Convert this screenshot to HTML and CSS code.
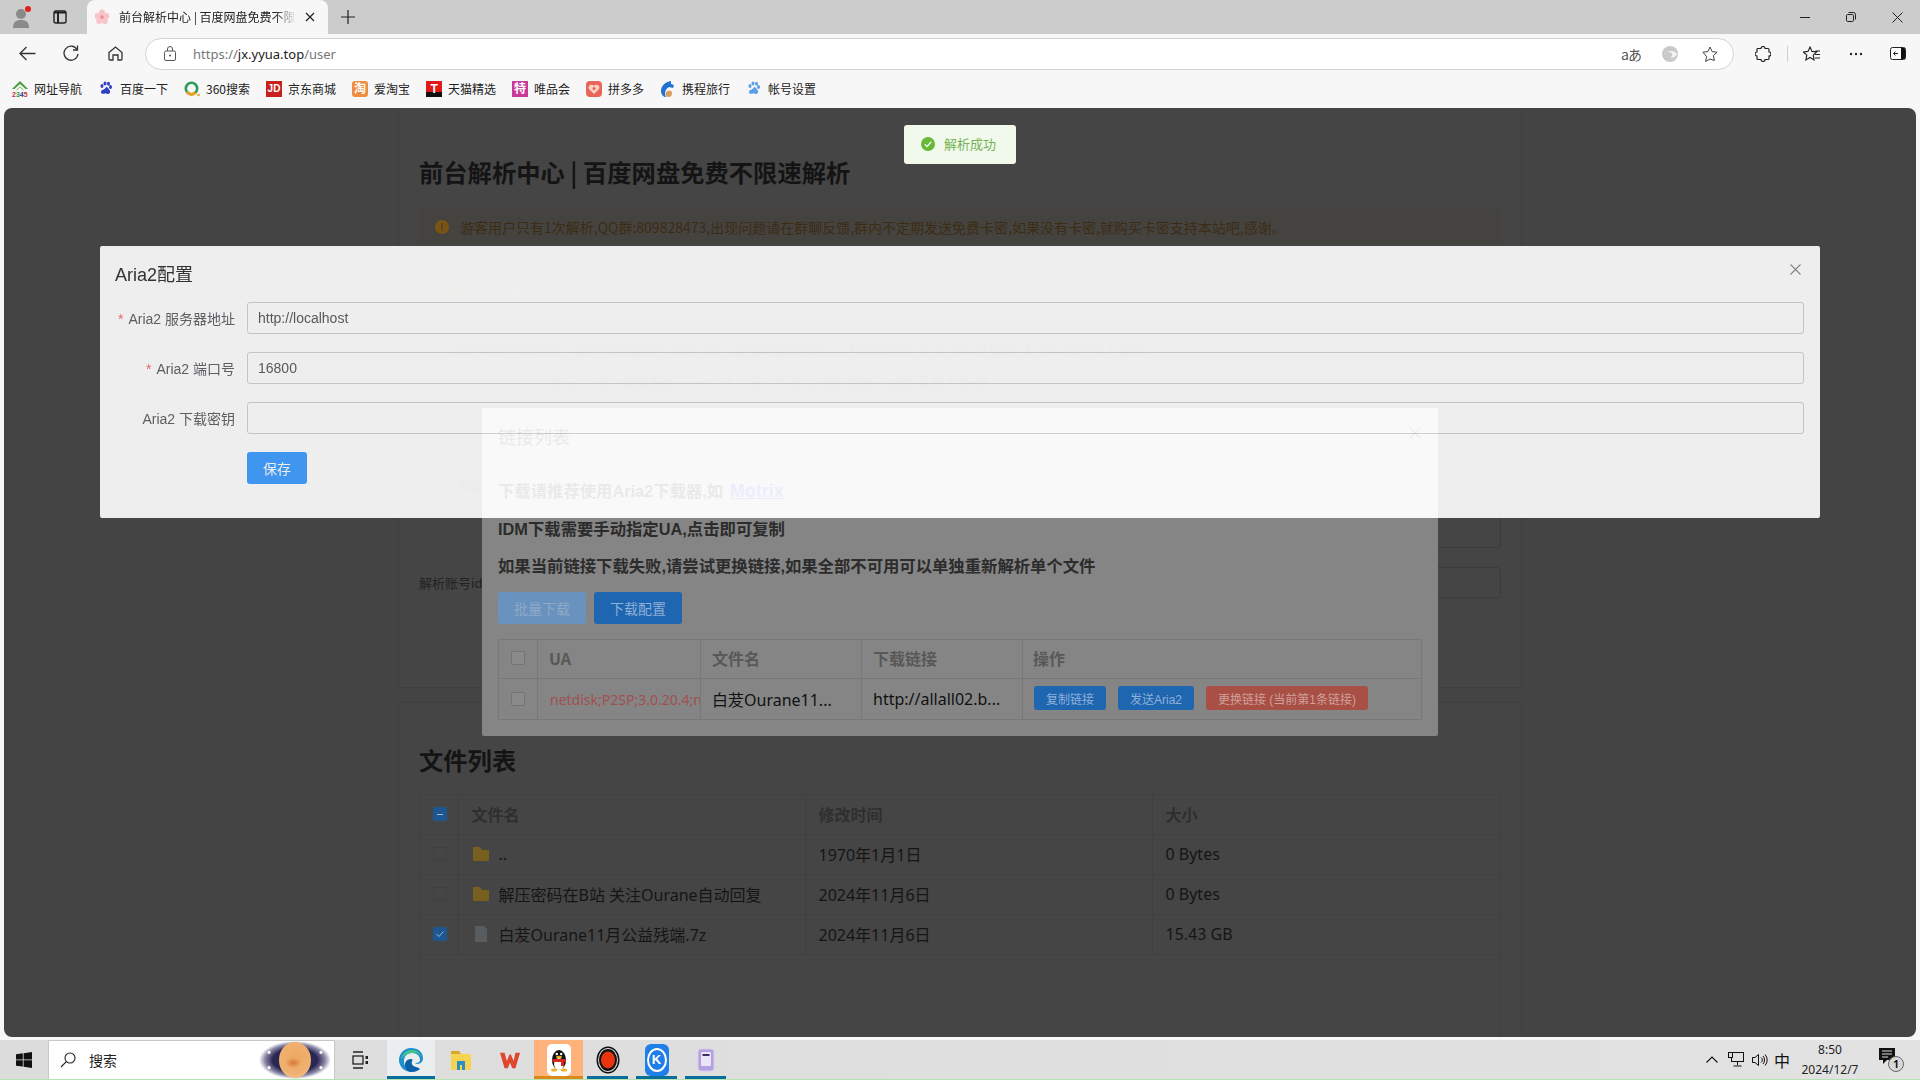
FILE: index.html
```html
<!DOCTYPE html>
<html lang="zh-CN">
<head>
<meta charset="utf-8">
<title>前台解析中心 | 百度网盘免费不限速解析</title>
<link rel="stylesheet" href="styles.css">
</head>
<body>
<header class="tabbar">
  <div class="profile">
    <svg width="20" height="24" viewBox="0 0 20 24"><circle cx="9" cy="9" r="5" fill="#8a8a8a"/><path d="M1 23c0-6 3-8 8-8s8 2 8 8z" fill="#8a8a8a"/><circle cx="16" cy="4" r="3" fill="#e0201c"/></svg>
  </div>
  <div class="tabactions">
    <svg width="16" height="16" viewBox="0 0 16 16" fill="none" stroke="#222" stroke-width="1.4"><rect x="2" y="2" width="12" height="12" rx="2"/><path d="M2 3.500h12M6 3v11" stroke-width="2"/></svg>
  </div>
  <div class="tab">
    <svg class="favicon" width="16" height="16" viewBox="0 0 16 16"><g fill="#f8c4c8"><circle cx="8" cy="3.600" r="3"/><circle cx="3.600" cy="7" r="3"/><circle cx="12.400" cy="7" r="3"/><circle cx="5.200" cy="12" r="3"/><circle cx="10.800" cy="12" r="3"/></g><circle cx="8" cy="8" r="2" fill="#ee8f98"/></svg>
    <span class="tabtitle">前台解析中心 | 百度网盘免费不限速解析</span>
    <svg class="tabclose" width="10" height="10" viewBox="0 0 10 10" stroke="#222" stroke-width="1.2"><path d="M1 1l8 8M9 1l-8 8"/></svg>
  </div>
  <div class="newtab">
    <svg width="14" height="14" viewBox="0 0 14 14" stroke="#222" stroke-width="1.2"><path d="M7 0v14M0 7h14"/></svg>
  </div>
  <div class="spacer"></div>
  <div class="winbtn"><svg width="10" height="10" viewBox="0 0 10 10" stroke="#222"><path d="M0 5.500h10"/></svg></div>
  <div class="winbtn"><svg width="10" height="10" viewBox="0 0 10 10" fill="none" stroke="#222"><rect x=".5" y="2.500" width="7" height="7" rx="1.200"/><path d="M2.500 .5h5a2 2 0 0 1 2 2v5"/></svg></div>
  <div class="winbtn"><svg width="11" height="11" viewBox="0 0 11 11" stroke="#222"><path d="M.5.5l10 10M10.500.5l-10 10"/></svg></div>
</header>

<nav class="toolbar">
  <div class="navbtn"><svg width="17" height="15" viewBox="0 0 17 15" fill="none" stroke="#333" stroke-width="1.3"><path d="M16.500 7.500H1M7.500 1 1 7.500 7.500 14"/></svg></div>
  <div class="navbtn"><svg width="16" height="17" viewBox="0 0 16 17" fill="none" stroke="#333" stroke-width="1.3"><path d="M14 4.500A7 7 0 1 0 15 9"/><path d="M14.500 .5v4.500H10"/></svg></div>
  <div class="navbtn"><svg width="15" height="15" viewBox="0 0 15 15" fill="none" stroke="#333" stroke-width="1.3"><path d="M1 6.500 7.500 1 14 6.500V13a1 1 0 0 1-1 1h-3V9H5v5H2a1 1 0 0 1-1-1z"/></svg></div>
  <div class="address">
    <svg class="lock" width="12" height="15" viewBox="0 0 12 15" fill="none" stroke="#555"><rect x=".5" y="5" width="11" height="9.500" rx="1.500"/><path d="M3.500 5V3a2.500 2.500 0 0 1 5 0v2"/><circle cx="6" cy="9.500" r="1" fill="#555" stroke="none"/></svg>
    <span class="url"><span class="urlmuted">https://</span>jx.yyua.top<span class="urlmuted">/user</span></span>
    <span class="translate">aあ</span>
    <svg class="addr-edge" width="16" height="16" viewBox="0 0 16 16"><circle cx="8" cy="8" r="8" fill="#c9c9c9"/><path d="M1.500 9.500C3 5.500 8 5 10 7.500c1 1.500 0 3.500-2 3.500 3 1.500 6 0 7-3-1-2-3-3-6-3-3 0-6 2-7.500 4.500z" fill="#f4f4f4"/></svg>
    <svg class="addr-star" width="16" height="16" viewBox="0 0 16 16" fill="none" stroke="#444"><path d="M8 1l2.100 4.600 5 .6-3.700 3.400 1 4.900L8 13l-4.400 2.500 1-4.900L.9 6.200l5-.6z"/></svg>
  </div>
  <div class="toolright">
    <div class="navbtn2"><svg width="16" height="16" viewBox="0 0 16 16" fill="none" stroke="#222" stroke-width="1.200"><path d="M6 2.500a2 2 0 0 1 4 0h3a1 1 0 0 1 1 1v2.500a2 2 0 0 1 0 4v2.500a1 1 0 0 1-1 1h-3a2 2 0 0 1-4 0H3a1 1 0 0 1-1-1V10a2 2 0 0 1 0-4V3.500a1 1 0 0 1 1-1z"/></svg></div>
    <div class="toolsep"></div>
    <div class="navbtn2"><svg width="18" height="16" viewBox="0 0 18 16" fill="none" stroke="#222" stroke-width="1.100"><path d="M7 1l2 4.400 4.600.6-3.400 3.200.9 4.700L7 11.500 2.900 13.900l.9-4.700L.4 6 5 5.400zM12.500 5H17M12 8.500h5M12 12h5"/></svg></div>
    <div class="navbtn2"><svg width="14" height="4" viewBox="0 0 14 4" fill="#222"><circle cx="2" cy="2" r="1.200"/><circle cx="7" cy="2" r="1.200"/><circle cx="12" cy="2" r="1.200"/></svg></div>
    <div class="navbtn2 shift"><svg width="16" height="13" viewBox="0 0 16 13"><rect x=".5" y=".5" width="15" height="12" rx="2" fill="#fff" stroke="#222"/><path d="M11 1h3a1 1 0 0 1 1 1v9a1 1 0 0 1-1 1h-3z" fill="#111"/><path d="M8 6.500H3.500M5.500 4.500l-2 2 2 2" stroke="#222" fill="none"/></svg></div>
  </div>
</nav>

<nav class="bookmarks">
  <a class="bm"><svg width="16" height="16" viewBox="0 0 16 16"><path d="M8 0 0 8h2.500L8 3l5.500 5H16z" fill="#4a9b3c"/><path d="M4.500 9 8 6l3.500 3" fill="none" stroke="#7bbf5a"/><text x="0" y="15.500" font-size="7" font-family="Liberation Sans" font-weight="700"><tspan fill="#c33">2</tspan><tspan fill="#393">3</tspan><tspan fill="#339">4</tspan><tspan fill="#c33">5</tspan></text></svg>网址导航</a>
  <a class="bm"><svg class="pawsvg" width="16" height="16" viewBox="0 0 16 16" fill="#2f3fc0"><ellipse cx="4" cy="5" rx="1.500" ry="2"/><ellipse cx="7" cy="2.500" rx="1.500" ry="2"/><ellipse cx="10.500" cy="2.800" rx="1.500" ry="2"/><ellipse cx="12.500" cy="6" rx="1.500" ry="2"/><path d="M8 6c2 0 2.500 2 3.500 3s1 4-1.500 4-2-1-3-.6S3 13.500 3 11s4-2 5-5z"/></svg>百度一下</a>
  <a class="bm"><svg width="16" height="16" viewBox="0 0 16 16" fill="none"><circle cx="7.500" cy="7.500" r="5.700" stroke="#2a9d5c" stroke-width="2.600"/><path d="M2.800 11a5.700 5.700 0 0 0 8.800 .5" stroke="#f0a020" stroke-width="2.600"/><circle cx="14.500" cy="14" r="1.300" fill="#f0a020"/></svg>360搜索</a>
  <a class="bm"><span class="sq sq-jd">JD</span>京东商城</a>
  <a class="bm"><span class="sq sq-tao">淘</span>爱淘宝</a>
  <a class="bm"><span class="sq sq-t">T</span>天猫精选</a>
  <a class="bm"><span class="sq sq-te">特</span>唯品会</a>
  <a class="bm"><svg width="16" height="16" viewBox="0 0 16 16"><rect width="16" height="16" rx="4" fill="#e8655a"/><path d="M8 13 3 8c-2-3 3-6 5-3 2-3 7 0 5 3z" fill="#f8d0c4"/><circle cx="8" cy="7.500" r="1.500" fill="#e8655a"/></svg>拼多多</a>
  <a class="bm"><svg width="16" height="16" viewBox="0 0 16 16"><path d="M11 0C5 1 1 5 1 10c0 4 3 6 5 6-2-3-1-8 3-10l4 1 1-3-3-1z" fill="#1f74d0"/><path d="M8 10a3 3 0 0 0 1 6c3 0 3-3 3-5-1-1-3-2-4-1z" fill="#d8a060"/></svg>携程旅行</a>
  <a class="bm"><svg width="16" height="16" viewBox="0 0 16 16" fill="#5a9fe8"><ellipse cx="4" cy="5" rx="1.500" ry="2"/><ellipse cx="7" cy="2.500" rx="1.500" ry="2"/><ellipse cx="10.500" cy="2.800" rx="1.500" ry="2"/><ellipse cx="12.500" cy="6" rx="1.500" ry="2"/><path d="M8 6c2 0 2.500 2 3.500 3s1 4-1.500 4-2-1-3-.6S3 13.500 3 11s4-2 5-5z"/></svg>帐号设置</a>
</nav>

<main class="main">
  <div class="viewport">
    <div class="page">
      <section class="card card-top">
        <h1 class="pagetitle">前台解析中心 | 百度网盘免费不限速解析</h1>
        <div class="alert">
          <svg width="14" height="14" viewBox="0 0 14 14"><circle cx="7" cy="7" r="7" fill="#7a5410"/><rect x="6.200" y="3" width="1.600" height="5.500" fill="#444"/><rect x="6.200" y="9.500" width="1.600" height="1.600" fill="#444"/></svg>
          <span>游客用户只有1次解析,QQ群:809828473,出现问题请在群聊反馈,群内不定期发送免费卡密,如果没有卡密,就购买卡密支持本站吧,感谢。</span>
        </div>
        <p class="note-green">解析中心公告</p>
        <p class="note-long">请使用百度网盘客户端分享链接进行解析,输入链接和提取码后点击解析按钮,支持文件夹解析,大文件请使用下载器</p>
        <p class="note-tip">提示： 请勿频繁解析同一文件，多次失败后请更换账号或联系群主处理</p>
        <div class="field field-big"><span class="field-label">卡密</span><div class="field-input"></div></div>
        <div class="field"><span class="field-label">解析账号id</span><div class="field-input"></div></div>
      </section>
      <section class="card card-files">
        <h2 class="pagetitle">文件列表</h2>
        <div class="filebox">
          <table class="filetable">
            <colgroup><col class="fc1"><col class="fc2"><col class="fc3"><col class="fc4"></colgroup>
            <thead>
              <tr><th><span class="cb cb-on"><span class="cb-dash"></span></span></th><th>文件名</th><th>修改时间</th><th>大小</th></tr>
            </thead>
            <tbody>
              <tr><td><span class="cb"></span></td><td><span class="namecell"><svg width="18" height="18" viewBox="0 0 18 18"><path d="M1 2h7l2 3h7v10a1 1 0 0 1-1 1H2a1 1 0 0 1-1-1z" fill="#75601f"/></svg>..</span></td><td>1970年1月1日</td><td>0 Bytes</td></tr>
              <tr><td><span class="cb"></span></td><td><span class="namecell"><svg width="18" height="18" viewBox="0 0 18 18"><path d="M1 2h7l2 3h7v10a1 1 0 0 1-1 1H2a1 1 0 0 1-1-1z" fill="#75601f"/></svg>解压密码在B站 关注Ourane自动回复</span></td><td>2024年11月6日</td><td>0 Bytes</td></tr>
              <tr><td><span class="cb cb-on"><svg width="14" height="14" viewBox="0 0 14 14" fill="none" stroke="#9db8d8" stroke-width="1"><path d="M3.500 7l2.500 2.500 4.500-5"/></svg></span></td><td><span class="namecell"><svg width="18" height="18" viewBox="0 0 18 18"><path d="M3 1h9l3 3v13H3z" fill="#585c5e"/></svg>白茇Ourane11月公益残端.7z</span></td><td>2024年11月6日</td><td>15.43 GB</td></tr>
            </tbody>
          </table>
        </div>
      </section>
    </div>

    <div class="dialog-links">
      <svg class="dl-close" width="12" height="12" viewBox="0 0 12 12" stroke="#333" stroke-width="1.200"><path d="M1 1l10 10M11 1 1 11"/></svg>
      <div class="dl-title">链接列表</div>
      <p class="dl-line dl-first">下载请推荐使用Aria2下载器,如 <a class="motrix">Motrix</a></p>
      <p class="dl-line dl-second">IDM下载需要手动指定UA,点击即可复制</p>
      <p class="dl-line">如果当前链接下载失败,请尝试更换链接,如果全部不可用可以单独重新解析单个文件</p>
      <div class="dl-actions">
        <button class="btn btn-disabled">批量下载</button>
        <button class="btn btn-blue">下载配置</button>
      </div>
      <table class="linktable">
        <colgroup><col class="lc1"><col class="lc2"><col class="lc3"><col class="lc4"><col class="lc5"></colgroup>
        <thead><tr><th><span class="cb cb-light"></span></th><th>UA</th><th>文件名</th><th>下载链接</th><th>操作</th></tr></thead>
        <tbody><tr>
          <td><span class="cb cb-light"></span></td>
          <td class="ua"><span class="uatext">netdisk;P2SP;3.0.20.4;netdisk;11.33.3</span></td>
          <td>白茇Ourane11...</td>
          <td>http://allall02.b...</td>
          <td class="ops"><button class="mini mini-blue">复制链接</button><button class="mini mini-blue">发送Aria2</button><button class="mini mini-red">更换链接 (当前第1条链接)</button></td>
        </tr></tbody>
      </table>
    </div>

    <div class="dialog-aria">
      <svg class="da-close" width="11" height="11" viewBox="0 0 11 11" stroke="#8a8a8a" stroke-width="1.100"><path d="M.5.5l10 10M10.500.5l-10 10"/></svg>
      <div class="da-title">Aria2配置</div>
      <div class="form-item"><label class="form-label"><span class="req">*</span>Aria2 服务器地址</label><div class="form-input">http://localhost</div></div>
      <div class="form-item"><label class="form-label"><span class="req">*</span>Aria2 端口号</label><div class="form-input">16800</div></div>
      <div class="form-item"><label class="form-label">Aria2 下载密钥</label><div class="form-input"></div></div>
      <button class="savebtn">保存</button>
    </div>

    <div class="toast">
      <svg width="14" height="14" viewBox="0 0 14 14"><circle cx="7" cy="7" r="7" fill="#67b93a"/><path d="M3.800 7.200l2.300 2.300 4.200-4.700" fill="none" stroke="#f0f9eb" stroke-width="1.400"/></svg>
      <span>解析成功</span>
    </div>
  </div>
</main>

<footer class="taskbar">
  <div class="startbtn"><svg width="16" height="16" viewBox="0 0 16 16" fill="#111"><path d="M0 2.300 6.800 1.300v6.200H0zM7.600 1.200 16 0v7.500H7.600zM0 8.300h6.800v6.300L0 13.700zM7.600 8.300H16V16l-8.400-1.200z"/></svg></div>
  <div class="searchbox">
    <svg width="16" height="16" viewBox="0 0 16 16" fill="none" stroke="#222" stroke-width="1.100"><circle cx="10" cy="6" r="5"/><path d="M6.300 9.700 1 15"/></svg>
    <span class="searchtext">搜索</span>
    <div class="jupiter"><span class="planet"></span></div>
  </div>
  <div class="taskview"><svg width="16" height="18" viewBox="0 0 16 18" fill="none" stroke="#222" stroke-width="1.300"><path d="M1 1h10M1 17h10"/><rect x="1" y="5" width="10" height="8"/><rect x="13.500" y="5" width="2.500" height="3" fill="#222" stroke="none"/><rect x="13.500" y="10" width="2.500" height="3" fill="#222" stroke="none"/></svg></div>
  <div class="tb-app tb-edge"><svg width="24" height="26" viewBox="0 0 24 26"><path d="M12 1C5 1 0 7 0 13c0 7 6 12 12 12 4 0 7-1 9-3-5 2-11 0-11-5 0-2 1-3 2-4-4 0-6 3-6 6C3 11 7 6 13 6c5 0 8 3 8 7 0 2-2 3-4 3h-1c2 2 8 1 8-5C24 5 19 1 12 1z" fill="#1f8fd0"/><path d="M2 13C3 6 8 3 13 3c5 0 9 3 10 8-1-3-5-6-10-5-5 0-9 3-11 7z" fill="#45c488"/><path d="M6 18c0-3 2-6 6-6 2 0 2 1 1 2-1 2 0 5 4 6 1 0 3 1 4 2-3 2-6 3-9 3-4-1-6-4-6-7z" fill="#0b5ea8"/></svg></div>
  <div class="tb-app"><svg width="22" height="20" viewBox="0 0 22 20"><path d="M1 1h8l2 3h10v15a1 1 0 0 1-1 1H2a1 1 0 0 1-1-1z" fill="#f7d352"/><path d="M1 1h8l2 3H1z" fill="#d9a72a"/><rect x="7" y="11" width="8" height="9" fill="#2b8fc4"/><rect x="10" y="15" width="2" height="5" fill="#f7d352"/></svg></div>
  <div class="tb-app"><svg width="24" height="20" viewBox="0 0 24 22"><path d="M1 3h5l2.500 9 3-7h1.500l3 7L18 3h5l-5 17h-3.500l-2.500-6-2.500 6H6z" fill="#e0452e"/></svg></div>
  <div class="tb-app tb-qq"><div class="qqtile"><svg width="18" height="24" viewBox="0 0 18 24"><ellipse cx="9" cy="12" rx="7" ry="10" fill="#111"/><ellipse cx="9" cy="16" rx="5" ry="6" fill="#fff"/><rect x="2" y="11" width="14" height="3" rx="1.500" fill="#d9261c"/><path d="M11 13h3v5h-3z" fill="#d9261c"/><ellipse cx="9" cy="9" rx="3" ry="1.300" fill="#f2b21e"/><circle cx="6.800" cy="6" r="1.200" fill="#fff"/><circle cx="11.200" cy="6" r="1.200" fill="#fff"/><ellipse cx="4" cy="22" rx="3" ry="1.500" fill="#f2b21e"/><ellipse cx="14" cy="22" rx="3" ry="1.500" fill="#f2b21e"/></svg></div></div>
  <div class="tb-app tb-run"><svg width="24" height="28" viewBox="0 0 24 28"><ellipse cx="12" cy="14" rx="11.500" ry="13.500" fill="#111"/><ellipse cx="12" cy="14" rx="10" ry="12" fill="#ddd"/><ellipse cx="12" cy="14" rx="9" ry="11" fill="#111"/><ellipse cx="12" cy="14" rx="7" ry="8.500" fill="#e8340f"/></svg></div>
  <div class="tb-app tb-run"><div class="ktile"><span class="kmark">K</span></div></div>
  <div class="tb-app tb-run"><svg width="18" height="26" viewBox="0 0 18 26"><rect x="1" y="2" width="16" height="22" rx="3" fill="#b3a0e0" stroke="#d8cdf0"/><rect x="4" y="5" width="10" height="14" rx="1" fill="#e9e4f6"/><rect x="5.500" y="7" width="7" height="2" fill="#3a2f60"/></svg></div>
  <div class="spacer"></div>
  <div class="tray">
    <svg class="t-caret" width="12" height="7" viewBox="0 0 12 7" fill="none" stroke="#111" stroke-width="1.100"><path d="M.5 6.500 6 1l5.500 5.500"/></svg>
    <svg class="t-net" width="16" height="15" viewBox="0 0 16 15" fill="none" stroke="#111"><rect x="3.500" y=".5" width="12" height="9"/><rect x=".5" y=".5" width="4" height="5" fill="#ddd"/><path d="M9.500 10v3M5.500 14h8"/></svg>
    <svg class="t-vol" width="16" height="14" viewBox="0 0 16 14" fill="none" stroke="#111"><path d="M.5 4.500h2.500L6.500 1.500v11l-3.500-3H.5z"/><path d="M9 4.500a3 3 0 0 1 0 5M11 3a6 6 0 0 1 0 8M13 1.500a8 8 0 0 1 0 11"/></svg>
    <span class="t-ime">中</span>
    <div class="clock"><span>8:50</span><span>2024/12/7</span></div>
    <div class="notify">
      <svg width="16" height="16" viewBox="0 0 16 16"><path d="M0 0h16v12H8l-4 4v-4H0z" fill="#111"/><path d="M3 3h10M3 6h10M3 9h6" stroke="#ddd"/></svg>
      <span class="badge">1</span>
    </div>
  </div>
</footer>
</body>
</html>
```
FILE: styles.css
```css
* { box-sizing: border-box; }
html, body { margin: 0; height: 100%; }
body {
  width: 1920px; height: 1080px; overflow: hidden;
  display: flex; flex-direction: column;
  background: #f7f7f7; color: #222;
  font-family: "Noto Sans", "Noto Sans CJK SC", sans-serif;
}
p, h1, h2 { margin: 0; }
svg { flex: none; display: block; }
.spacer { flex: 1; }

/* title bar */
.tabbar { height: 34px; flex: none; background: #cccccc; display: flex; align-items: center; }
.profile { width: 20px; margin-left: 12px; }
.tabactions { width: 16px; margin-left: 20px; }
.tab {
  width: 241px; height: 34px; margin-left: 19px; align-self: flex-end;
  background: #f7f7f7; border-radius: 8px 8px 0 0;
  display: flex; align-items: center; padding: 0 12px 1px 7px;
}
.tabtitle {
  width: 177px; margin-left: 9px; font-size: 12px; white-space: nowrap; overflow: hidden;
  font-family: "Noto Sans CJK SC", sans-serif; color: #222;
  -webkit-mask-image: linear-gradient(90deg, #000 88%, transparent);
  mask-image: linear-gradient(90deg, #000 88%, transparent);
}
.tabclose { margin-left: 9px; }
.newtab { margin-left: 13px; }
.winbtn { width: 46px; display: flex; justify-content: center; }

/* toolbar */
.toolbar { height: 36px; flex: none; background: #f7f7f7; display: flex; align-items: center; padding: 3px 0 0 5px; }
.navbtn { width: 44px; display: flex; justify-content: center; }
.address {
  flex: 1; height: 32px; margin-left: 8px; background: #fff;
  border: 1px solid #d4d4d4; border-radius: 16px;
  display: flex; align-items: center; padding-left: 18px;
}
.url { margin-left: 17px; font-size: 13px; color: #222; flex: 1; font-family: "Noto Sans", sans-serif; }
.urlmuted { color: #777; }
.translate { font-size: 14px; color: #555; width: 20px; margin-right: 21px; margin-left: -1px; white-space: nowrap; letter-spacing: -1px; font-family: "Noto Sans CJK JP", sans-serif; }
.addr-edge { margin-right: 24px; }
.addr-star { margin-right: 15px; }
.toolright { width: 186px; flex: none; display: flex; align-items: center; padding-left: 7px; }
.navbtn2 { width: 44px; flex: none; display: flex; justify-content: center; }
.navbtn2.shift { margin-left: -2px; }
.toolsep { width: 1px; height: 16px; background: #cfcfcf; margin: 0 2px; }

/* bookmarks */
.bookmarks {
  height: 38px; flex: none; background: #f7f7f7; display: flex; align-items: center; gap: 16px;
  padding: 0 0 1px 12px; font-family: "Noto Sans CJK SC", sans-serif; font-size: 12px; color: #222;
}
.bm { display: flex; align-items: center; gap: 6px; white-space: nowrap; }
.sq { width: 16px; height: 16px; display: flex; align-items: center; justify-content: center; color: #fff; font-weight: 700; line-height: 1; font-family: "Liberation Sans", "Noto Sans CJK SC", sans-serif; }
.sq-jd { background: #c8201e; font-size: 10px; }
.sq-tao { background: #ee8d3e; font-size: 12px; border-radius: 3px; }
.sq-t { background: linear-gradient(#e01a1a 70%, #111 70%); font-size: 12px; }
.sq-te { background: #c93a98; font-size: 12px; }

/* browser viewport */
.main { flex: 1; min-height: 0; padding: 0 4px 3px 4px; display: flex; }
.viewport { position: relative; flex: 1; overflow: hidden; border-radius: 8px; background: #444444; }
.page { height: 100%; display: flex; flex-direction: column; align-items: center; }
.card { width: 1124px; flex: none; padding: 0 20px; background: #454545; border: 1px solid #3f3f3f; }
.card-top { height: 580px; border-top: 0; }
.card-files { flex: 1; margin-top: 14px; border-bottom: 0; padding-top: 40px; display: flex; flex-direction: column; }
.pagetitle { font-size: 24.3px; line-height: 34px; font-weight: 700; color: #141414; font-family: "Noto Sans CJK SC", sans-serif; }
.card-top .pagetitle { margin-top: 47px; }
.alert {
  height: 35px; margin-top: 20px; padding-left: 16px; background: #45433f;
  display: flex; align-items: center; gap: 11px; font-size: 14px; color: #3c2c14;
  font-family: "Noto Sans CJK SC", sans-serif; white-space: nowrap;
}
.note-green { margin-top: 34px; padding-left: 18px; font-size: 14px; line-height: 20px; color: #456a2c; font-family: "Noto Sans CJK SC", sans-serif; }
.note-long { margin-top: 42px; padding-left: 30px; font-size: 14px; line-height: 20px; color: #2c2c2c; font-family: "Noto Sans CJK SC", sans-serif; }
.note-tip { margin-top: 12px; padding-left: 130px; font-size: 14px; line-height: 20px; color: #2c2c2c; font-family: "Noto Sans CJK SC", sans-serif; }
.field { display: flex; margin-top: 19px; height: 31px; align-items: center; }
.field-big { height: 78px; margin-top: 78px; align-items: flex-start; }
.field-label { width: 62px; flex: none; font-size: 13px; color: #222; text-align: right; white-space: nowrap; font-family: "Noto Sans CJK SC", sans-serif; }
.field-big .field-label { padding-top: 5px; }
.field-input { flex: 1; height: 100%; margin-left: 3px; border: 1px solid #3c3c3c; border-radius: 3px; }

/* file table */
.filebox { flex: 1; width: 1082px; margin-top: 17px; border: 1px solid #404040; border-bottom: 0; }
.filetable { width: 1080px; border-collapse: collapse; table-layout: fixed; font-size: 16px; color: #151515; }
.fc1 { width: 38px; } .fc2 { width: 347px; } .fc3 { width: 347px; }
.filetable th { height: 39px; padding: 0 0 0 13px; text-align: left; color: #2f2f2f; font-weight: 700; border-bottom: 1px solid #404040; border-left: 1px solid #404040; font-family: "Noto Sans CJK SC", sans-serif; }
.filetable td { height: 40px; padding: 0 0 0 13px; border-bottom: 1px solid #404040; border-left: 1px solid #404040; white-space: nowrap; }
.filetable th:first-child, .filetable td:first-child { padding-left: 13px; border-left: 0; }
.namecell { display: flex; align-items: center; gap: 9px; }
.cb { display: block; width: 14px; height: 14px; border: 1px solid #3f3f3f; border-radius: 2px; }
.cb-on { background: #1d5690; border-color: #1d5690; display: flex; align-items: center; justify-content: center; }
.cb-on svg { margin: -1px; }
.cb-dash { width: 6px; height: 1px; background: #9db8d8; }
.cb-light { border-color: #747474; background: #8a8a8a; }

/* link list dialog */
.dialog-links {
  position: absolute; left: 478px; top: 300px; width: 956px; height: 328px;
  padding: 16px 16px 0; border-radius: 2px;
  background: linear-gradient(#bdbdbd 110px, #858585 110px);
}
.dl-title { font-size: 18px; line-height: 24px; color: #111; font-family: "Noto Sans CJK SC", sans-serif; }
.dl-close { position: absolute; right: 17px; top: 19px; }
.dl-line { font-size: 16.35px; line-height: 24px; font-weight: 700; color: #2c2c2c; margin-top: 13px; font-family: "Liberation Sans", "Noto Sans CJK SC", sans-serif; }
.dl-first { margin-top: 31px; color: #111; }
.dl-second { margin-top: 14px; }
.motrix { margin-left: 2px; font-size: 18px; line-height: 20px; color: #2a3fe0; text-decoration: underline; }
.dl-actions { display: flex; gap: 8px; margin-top: 14px; }
.btn { width: 88px; height: 32px; border: 0; border-radius: 3px; font-size: 14px; padding: 0; font-family: "Noto Sans CJK SC", sans-serif; }
.btn-disabled { background: #6a92be; color: #8fa9c6; }
.btn-blue { background: #1f66b0; color: #8fb0d8; }
.linktable { width: 924px; margin-top: 15px; border-collapse: collapse; table-layout: fixed; font-size: 16px; color: #111; }
.lc1 { width: 39px; } .lc2 { width: 163px; } .lc3 { width: 161px; } .lc4 { width: 161px; }
.linktable th, .linktable td { border: 1px solid #787878; padding: 0 0 0 11px; text-align: left; white-space: nowrap; overflow: hidden; }
.linktable th { height: 39px; padding-bottom: 2px; color: #585858; font-weight: 700; font-family: "Noto Sans CJK SC", sans-serif; }
.linktable td { height: 41px; }
.linktable th:first-child, .linktable td:first-child { padding-left: 12px; }
.linktable th:last-child { padding-left: 10px; }
.linktable .ua { font-size: 14px; color: #a05050; padding: 0 0 0 12px; font-family: "Noto Sans", sans-serif; }
.uatext { display: block; overflow: hidden; }
.linktable .ops { padding: 0 0 2px 11px; }
.mini { height: 24px; border: 0; padding: 0 12px; margin-right: 12px; border-radius: 3px; font-size: 12px; vertical-align: middle; font-family: "Liberation Sans", "Noto Sans CJK SC", sans-serif; }
.mini-blue { background: #1f66b0; color: #8fb0d8; }
.mini-red { background: #a84f46; color: #d0a09a; }

/* aria2 dialog */
.dialog-aria {
  position: absolute; left: 96px; top: 138px; width: 1720px; height: 272px;
  padding: 17px 16px 0 15px; background: #fff; opacity: .91; border-radius: 2px;
  font-family: "Liberation Sans", "Noto Sans CJK SC", sans-serif; color: #606266;
}
.da-title { font-size: 18px; line-height: 24px; color: #303133; }
.da-close { position: absolute; right: 19px; top: 18px; }
.form-item { display: flex; align-items: center; margin-top: 18px; height: 32px; }
.da-title + .form-item { margin-top: 15px; }
.form-label { width: 132px; flex: none; padding-right: 12px; padding-bottom: 1px; text-align: right; font-size: 14px; white-space: nowrap; }
.req { color: #f56c6c; margin-right: 5px; }
.form-input { flex: 1; height: 32px; border: 1px solid #cfd1d6; border-radius: 3px; padding-left: 10px; font-size: 14px; line-height: 30px; color: #5a5c60; }
.savebtn { display: block; width: 60px; height: 32px; margin: 18px 0 0 132px; padding: 0; border: 0; border-radius: 3px; background: #409eff; color: #fff; font-size: 14px; font-family: "Noto Sans CJK SC", sans-serif; }

/* toast */
.toast {
  position: absolute; left: 900px; top: 17px; width: 112px; height: 39px;
  background: #f0f9eb; border-radius: 3px; display: flex; align-items: center; gap: 9px; padding: 0 0 2px 17px;
  font-size: 13px; color: #76b356; font-family: "Noto Sans CJK SC", sans-serif; white-space: nowrap;
}

/* taskbar */
.taskbar {
  height: 40px; flex: none; background: linear-gradient(90deg, #dcdcdc, #e2e2e2); display: flex; align-items: center;
  border-bottom: 1px solid #b5e4b0; color: #111;
}
.startbtn { width: 48px; display: flex; justify-content: center; }
.searchbox {
  width: 287px; height: 39px; background: #fff; border: 1px solid #c8c8c8; border-bottom: 0;
  display: flex; align-items: center; padding-left: 11px;
}
.searchtext { margin-left: 13px; font-size: 14px; font-family: "Noto Sans CJK SC", sans-serif; color: #222; flex: 1; }
.jupiter {
  width: 72px; height: 38px; margin-right: 3px; display: flex; align-items: center; justify-content: center;
  background:
    radial-gradient(circle at 14% 30%, #fff 0 1px, transparent 2px),
    radial-gradient(circle at 86% 30%, #fff 0 1px, transparent 2px),
    radial-gradient(circle at 14% 70%, #fff 0 1px, transparent 2px),
    radial-gradient(circle at 86% 70%, #fff 0 1px, transparent 2px),
    radial-gradient(closest-side, #2b2755 0 62%, #8d8aa8 84%, #fff 100%);
}
.planet { width: 32px; height: 36px; border-radius: 50%; display: block; background: radial-gradient(ellipse 8px 5px at 45% 58%, #d8763a, transparent), radial-gradient(circle at 50% 45%, #eda860, #f0b070 60%, #f8d0a0 100%); }
.taskview { width: 52px; padding-right: 2px; display: flex; justify-content: center; }
.tb-app { width: 49px; height: 39px; display: flex; align-items: center; justify-content: center; padding: 3px 0 3px; }
.tb-edge { width: 48px; background: linear-gradient(#0a6e9a, #0a6e9a) bottom/100% 3px no-repeat, #eaeeef; margin-right: 1px; }
.tb-qq { background: linear-gradient(#d88a1f, #d88a1f) bottom/100% 3px no-repeat, #ffb27a; }
.tb-run { background: linear-gradient(#0a6e9a, #0a6e9a) center bottom/41px 3px no-repeat; }
.qqtile { width: 24px; height: 32px; border-radius: 5px; background: #fff; display: flex; align-items: center; justify-content: center; }
.ktile { width: 24px; height: 32px; border-radius: 6px; background: #1f7fe8; display: flex; align-items: center; justify-content: center; }
.kmark { width: 20px; height: 24px; border: 2px solid #fff; border-radius: 50%; color: #fff; font-size: 13px; font-weight: 700; line-height: 20px; text-align: center; font-family: "Liberation Sans", sans-serif; }
.tray { display: flex; align-items: center; }
.t-caret { margin-right: 10px; }
.t-net { margin-right: 8px; }
.t-vol { margin-right: 6px; }
.t-ime { font-size: 16px; width: 16px; line-height: 1; margin-right: 9px; font-family: "Noto Sans CJK SC", sans-serif; }
.clock { width: 62px; display: flex; flex-direction: column; align-items: center; font-size: 12px; line-height: 20px; color: #222; font-family: "Noto Sans", sans-serif; }
.notify { position: relative; width: 26px; height: 24px; margin: 0 15px 0 18px; }
.badge { position: absolute; left: 9px; top: 8px; width: 16px; height: 16px; border: 1px solid #666; border-radius: 50%; background: #d8d8d8; font-size: 10px; font-weight: 700; line-height: 14px; text-align: center; }
```
